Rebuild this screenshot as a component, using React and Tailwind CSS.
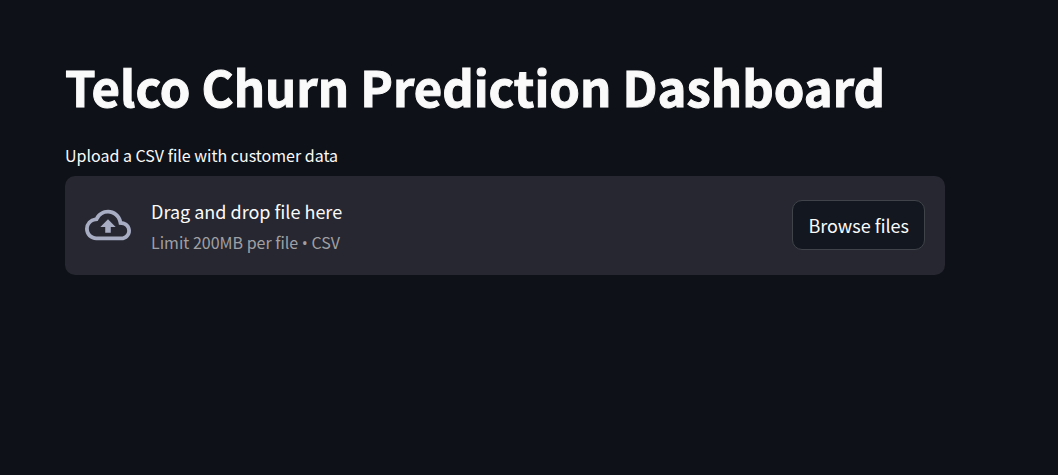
import { useRef } from "react";

function CloudUploadIcon() {
  return (
    <svg viewBox="0 0 24 24" className="size-[46px] shrink-0 fill-[#a9adc4]" aria-hidden="true">
      <path d="M19.35 10.04A7.49 7.49 0 0012 4C9.11 4 6.6 5.64 5.35 8.04A5.994 5.994 0 000 14c0 3.31 2.69 6 6 6h13c2.76 0 5-2.24 5-5 0-2.64-2.05-4.78-4.65-4.96zM19 18H6c-2.21 0-4-1.79-4-4 0-2.05 1.53-3.76 3.56-3.97l1.07-.11.5-.95A5.469 5.469 0 0112 6c2.62 0 4.88 1.86 5.39 4.43l.3 1.5 1.53.11A2.98 2.98 0 0122 15c0 1.65-1.35 3-3 3zM8 13h2.55v3h2.9v-3H16l-4-4z" />
    </svg>
  );
}

function FileUploader() {
  const inputRef = useRef(null);
  return (
    <div>
      <label htmlFor="csv-file" className="block text-base leading-6">
        Upload a CSV file with customer data
      </label>
      <input ref={inputRef} id="csv-file" type="file" accept=".csv" className="hidden" />
      <section className="mt-[9px] flex items-center gap-5 rounded-[10px] bg-[#262730] px-5 pt-[18px] pb-[19px]">
        <CloudUploadIcon />
        <div className="grow">
          <p className="text-lg leading-[34px]">Drag and drop file here</p>
          <p className="text-base leading-7 text-[#a0a0a4]">
            Limit 200MB per file <span className="font-['Open_Sans',sans-serif] leading-none">•</span> CSV
          </p>
        </div>
        <button
          type="button"
          onClick={() => inputRef.current.click()}
          className="h-[50px] shrink-0 cursor-pointer rounded-[10px] border border-[#41434a] bg-[#131720] px-[15px] text-lg leading-6"
        >
          Browse files
        </button>
      </section>
    </div>
  );
}

export default function App() {
  return (
    <div className="min-h-screen bg-[#0e1117] pt-[53px] pr-[113px] pb-10 pl-[65px] font-['Noto_Sans_CJK_SC','Source_Sans_Pro',sans-serif] text-[#fafafa]">
      <main>
        <h1 className="mb-6 text-[49px] leading-[66px] font-bold [-webkit-text-stroke:1px]">
          Telco Churn Prediction Dashboard
        </h1>
        <FileUploader />
      </main>
    </div>
  );
}
